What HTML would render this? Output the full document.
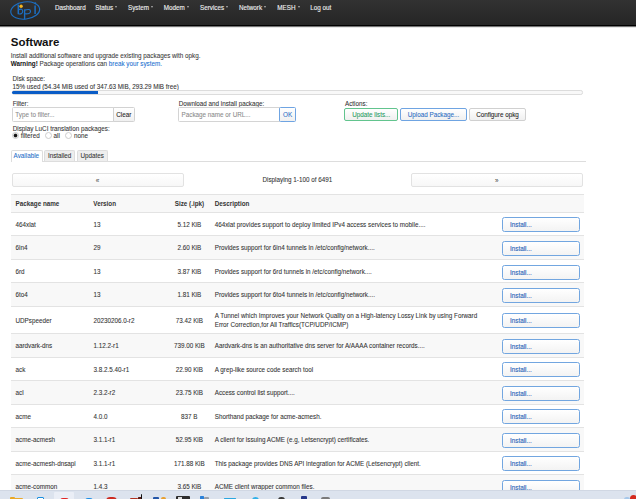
<!DOCTYPE html><html><head><meta charset="utf-8"><style>
*{margin:0;padding:0;box-sizing:border-box}
html,body{width:636px;height:499px;overflow:hidden;background:#fff}
body{font-family:"Liberation Sans",sans-serif;font-size:6.3px;color:#333;position:relative;-webkit-text-stroke:0.07px currentColor}
.t{position:absolute;line-height:8px;white-space:nowrap}
.b,b{font-weight:bold;-webkit-text-stroke:0}
#hdr{position:absolute;left:0;top:0;width:636px;height:26px;background:linear-gradient(#323232,#252525);border-bottom:1px solid #000;box-shadow:0 1px 1px rgba(0,0,0,.55)}
.nav{color:#f2f2f2;text-shadow:0 -0.5px 0 rgba(0,0,0,.4);-webkit-text-stroke:0.12px #f2f2f2}
.caret{position:absolute;width:0;height:0;border-left:1.5px solid transparent;border-right:1.5px solid transparent;border-top:2px solid #b0b0b0}
.box{position:absolute;border:1px solid #d4d4d4;border-radius:1.5px;background:#fff}
.btn{position:absolute;border:1px solid #c6c6c6;border-radius:2px;background:linear-gradient(#fff,#f0f0f0);text-align:center;line-height:11px;color:#333}
.row{position:absolute;left:11px;width:573px;border-bottom:1px solid #e3e3e3}
.g{background:#f8f8f8}
.inst{position:absolute;left:502.4px;width:77.2px;height:15px;border:1.3px solid #72a6e0;border-radius:2.5px;background:linear-gradient(#fff,#f3f3f3);color:#2a64b8;padding-left:6.6px;-webkit-text-stroke:0.12px #2a64b8;line-height:14.4px}
.tb{position:absolute;bottom:0}
</style></head><body>
<div id="hdr"></div>
<svg style="position:absolute;left:0;top:0" width="50" height="25" viewBox="0 0 50 25">
<g fill="none" stroke="#1d6fc2">
<ellipse cx="25.2" cy="10.5" rx="14.5" ry="8.6" transform="rotate(-7 25.2 10.5)" stroke-width="1.15"/>
<path d="M18.3 4.6 V14.2" stroke-width="1.5"/>
<path d="M18.4 9.8 Q22.6 7.9 22.7 11.3 Q22.6 14.4 18.6 14" stroke-width="1.15"/>
<path d="M24.6 9.4 V19.2" stroke-width="1.4"/>
<path d="M24.6 10.1 Q30.6 8.3 30.5 11.5 Q30.3 14.4 24.7 13.8" stroke-width="1.15"/>
<path d="M35.1 5.4 V14.1" stroke-width="1.5"/>
</g>
<circle cx="35.3" cy="3.2" r="1" fill="#1d6fc2"/>
<circle cx="21.1" cy="6.2" r="1.7" fill="#f4b522"/>
</svg>
<div class="t nav" style="left:54.9px;top:4.02px">Dashboard</div>
<div class="t nav" style="left:95.3px;top:4.02px">Status</div>
<div class="caret" style="left:115.16px;top:6.1px"></div>
<div class="t nav" style="left:128px;top:4.02px">System</div>
<div class="caret" style="left:151.00px;top:6.1px"></div>
<div class="t nav" style="left:163.8px;top:4.02px">Modem</div>
<div class="caret" style="left:186.81px;top:6.1px"></div>
<div class="t nav" style="left:200px;top:4.02px">Services</div>
<div class="caret" style="left:226.16px;top:6.1px"></div>
<div class="t nav" style="left:239px;top:4.02px">Network</div>
<div class="caret" style="left:264.11px;top:6.1px"></div>
<div class="t nav" style="left:277.3px;top:4.02px">MESH</div>
<div class="caret" style="left:297.50px;top:6.1px"></div>
<div class="t nav" style="left:310.3px;top:4.02px">Log out</div>
<div class="t b" style="left:10.8px;top:35.12px;line-height:14px;font-size:11.5px;color:#111">Software</div>
<div class="t" style="left:10.7px;top:51.82px;color:#3a3a3a">Install additional software and upgrade existing packages with opkg.</div>
<div class="t" style="left:10.7px;top:60.42px;color:#3a3a3a"><b style="color:#111">Warning!</b> Package operations can <span style="color:#1a6fd0">break your system.</span></div>
<div class="t" style="left:12.5px;top:75.12px">Disk space:</div>
<div class="t" style="left:12.5px;top:83.42px">15% used (54.34 MiB used of 347.63 MiB, 293.29 MiB free)</div>
<div style="position:absolute;left:12px;top:90.3px;width:571px;height:4.4px;border:1px solid #dcdcdc;border-radius:2.2px;background:#f8f8f8"></div>
<div style="position:absolute;left:12.3px;top:90.8px;width:86px;height:3.4px;background:#0a5cc6;border-radius:1.7px 0 0 1.7px"></div>
<div class="t" style="left:12.7px;top:99.72px">Filter:</div>
<div class="box" style="left:12px;top:107.2px;width:101.6px;height:14.9px;border-radius:1.5px 0 0 1.5px"></div>
<div class="t" style="left:15.3px;top:110.52px;color:#8a8a8a">Type to filter...</div>
<div class="btn" style="left:113px;top:107.2px;width:21.6px;height:14.9px;border-radius:0 1.5px 1.5px 0;line-height:13px;border-color:#d2d2d2;color:#222">Clear</div>
<div class="t" style="left:178.8px;top:99.72px">Download and install package:</div>
<div class="box" style="left:178.4px;top:107.2px;width:101.4px;height:14.9px;border-radius:1.5px 0 0 1.5px"></div>
<div class="t" style="left:181.6px;top:110.52px;color:#8a8a8a">Package name or URL...</div>
<div class="btn" style="left:279.3px;top:107px;width:16.5px;height:14.8px;border-radius:1.5px;line-height:14px;border:1.2px solid #6fa4e2;color:#2a6fc6">OK</div>
<div class="t" style="left:345px;top:99.72px">Actions:</div>
<div class="btn" style="left:344.3px;top:107.6px;width:54px;height:13px;border:1.3px solid #62c48e;color:#1f9a5f">Update lists...</div>
<div class="btn" style="left:400.2px;top:107.6px;width:66.7px;height:13px;border:1.3px solid #6fa4e2;color:#2a6cc2">Upload Package...</div>
<div class="btn" style="left:469.2px;top:107.6px;width:56.6px;height:13px;border-color:#d0d0d0;color:#222">Configure opkg</div>
<div class="t" style="left:12.7px;top:124.62px">Display LuCI translation packages:</div>
<div style="position:absolute;left:11.80px;top:131.8px;width:7px;height:7px;border:1px solid #cdcdcd;border-radius:50%;background:#fff"><div style="position:absolute;left:0.95px;top:0.95px;width:3.1px;height:3.1px;border-radius:50%;background:#111;box-shadow:0 0 0 0.4px #444"></div></div>
<div class="t" style="left:20.75px;top:131.92px">filtered</div>
<div style="position:absolute;left:45.00px;top:131.8px;width:7px;height:7px;border:1px solid #cdcdcd;border-radius:50%;background:#fff"></div>
<div class="t" style="left:53.6px;top:131.92px">all</div>
<div style="position:absolute;left:65.00px;top:131.8px;width:7px;height:7px;border:1px solid #cdcdcd;border-radius:50%;background:#fff"></div>
<div class="t" style="left:74px;top:131.92px">none</div>
<div style="position:absolute;left:11px;top:160.6px;width:574.5px;height:1px;background:#ddd"></div>
<div style="position:absolute;left:10.5px;top:150.4px;width:32px;height:11.2px;border:1px solid #ddd;border-bottom:none;border-radius:2px 2px 0 0;background:#fff"></div>
<div class="t" style="left:13.6px;top:152.32px;color:#1e6fc9">Available</div>
<div style="position:absolute;left:44.4px;top:150.4px;width:30.6px;height:10.2px;border:1px solid #ddd;border-bottom:none;border-radius:2px 2px 0 0;background:#eee"></div>
<div class="t" style="left:47.9px;top:152.32px;color:#333">Installed</div>
<div style="position:absolute;left:76.6px;top:150.4px;width:31px;height:10.2px;border:1px solid #ddd;border-bottom:none;border-radius:2px 2px 0 0;background:#eee"></div>
<div class="t" style="left:80.4px;top:152.32px;color:#333">Updates</div>
<div class="btn" style="left:11.6px;top:173px;width:172px;height:14px;border-color:#e2e2e2;line-height:14px;background:linear-gradient(#fff,#f7f7f7);color:#555">&laquo;</div>
<div class="t" style="left:262.5px;top:176.02px;color:#333">Displaying 1-100 of 6491</div>
<div class="btn" style="left:411px;top:173px;width:171.5px;height:14px;border-color:#e2e2e2;line-height:14px;background:linear-gradient(#fff,#f7f7f7);color:#555">&raquo;</div>
<div style="position:absolute;left:11px;top:194px;width:573px;height:1px;background:#e3e3e3"></div>
<div class="row g" style="top:194.9px;height:17.9px"></div>
<div class="t b" style="left:15.6px;top:199.82px;color:#333">Package name</div>
<div class="t b" style="left:93.3px;top:199.82px;color:#333">Version</div>
<div class="t b" style="left:174.70px;top:199.82px;color:#333">Size (.ipk)</div>
<div class="t b" style="left:214.7px;top:199.82px;color:#333">Description</div>
<div class="row" style="top:212.90px;height:23.00px"></div>
<div class="t" style="left:15.5px;top:220.77px">464xlat</div>
<div class="t" style="left:93.5px;top:220.77px">13</div>
<div class="t" style="left:177.39px;top:220.77px">5.12 KiB</div>
<div class="t" style="left:214.7px;top:220.77px">464xlat provides support to deploy limited IPv4 access services to mobile....</div>
<div class="inst" style="top:217.40px">Install...</div>
<div class="row g" style="top:235.90px;height:24.00px"></div>
<div class="t" style="left:15.5px;top:244.27px">6in4</div>
<div class="t" style="left:93.5px;top:244.27px">29</div>
<div class="t" style="left:177.39px;top:244.27px">2.60 KiB</div>
<div class="t" style="left:214.7px;top:244.27px">Provides support for 6in4 tunnels in /etc/config/network....</div>
<div class="inst" style="top:240.90px">Install...</div>
<div class="row" style="top:259.90px;height:23.20px"></div>
<div class="t" style="left:15.5px;top:267.87px">6rd</div>
<div class="t" style="left:93.5px;top:267.87px">13</div>
<div class="t" style="left:177.39px;top:267.87px">3.87 KiB</div>
<div class="t" style="left:214.7px;top:267.87px">Provides support for 6rd tunnels in /etc/config/network....</div>
<div class="inst" style="top:264.50px">Install...</div>
<div class="row g" style="top:283.10px;height:23.80px"></div>
<div class="t" style="left:15.5px;top:291.37px">6to4</div>
<div class="t" style="left:93.5px;top:291.37px">13</div>
<div class="t" style="left:177.39px;top:291.37px">1.81 KiB</div>
<div class="t" style="left:214.7px;top:291.37px">Provides support for 6to4 tunnels in /etc/config/network....</div>
<div class="inst" style="top:288.00px">Install...</div>
<div class="row" style="top:306.90px;height:26.90px"></div>
<div class="t" style="left:15.5px;top:316.72px">UDPspeeder</div>
<div class="t" style="left:93.5px;top:316.72px">20230206.0-r2</div>
<div class="t" style="left:175.64px;top:316.72px">73.42 KiB</div>
<div class="t" style="left:214.7px;top:312.42px;line-height:8.6px">A Tunnel which Improves your Network Quality on a High-latency Lossy Link by using Forward<br>Error Correction,for All Traffics(TCP/UDP/ICMP)</div>
<div class="inst" style="top:313.35px">Install...</div>
<div class="row g" style="top:333.80px;height:24.10px"></div>
<div class="t" style="left:15.5px;top:342.22px">aardvark-dns</div>
<div class="t" style="left:93.5px;top:342.22px">1.12.2-r1</div>
<div class="t" style="left:173.89px;top:342.22px">739.00 KiB</div>
<div class="t" style="left:214.7px;top:342.22px">Aardvark-dns is an authoritative dns server for A/AAAA container records....</div>
<div class="inst" style="top:338.85px">Install...</div>
<div class="row" style="top:357.90px;height:23.00px"></div>
<div class="t" style="left:15.5px;top:365.77px">ack</div>
<div class="t" style="left:93.5px;top:365.77px">3.8.2.5.40-r1</div>
<div class="t" style="left:175.64px;top:365.77px">22.90 KiB</div>
<div class="t" style="left:214.7px;top:365.77px">A grep-like source code search tool</div>
<div class="inst" style="top:362.40px">Install...</div>
<div class="row g" style="top:380.90px;height:23.70px"></div>
<div class="t" style="left:15.5px;top:389.12px">acl</div>
<div class="t" style="left:93.5px;top:389.12px">2.3.2-r2</div>
<div class="t" style="left:175.64px;top:389.12px">23.75 KiB</div>
<div class="t" style="left:214.7px;top:389.12px">Access control list support....</div>
<div class="inst" style="top:385.75px">Install...</div>
<div class="row" style="top:404.60px;height:23.10px"></div>
<div class="t" style="left:15.5px;top:412.52px">acme</div>
<div class="t" style="left:93.5px;top:412.52px">4.0.0</div>
<div class="t" style="left:181.07px;top:412.52px">837 B</div>
<div class="t" style="left:214.7px;top:412.52px">Shorthand package for acme-acmesh.</div>
<div class="inst" style="top:409.15px">Install...</div>
<div class="row g" style="top:427.70px;height:24.10px"></div>
<div class="t" style="left:15.5px;top:436.12px">acme-acmesh</div>
<div class="t" style="left:93.5px;top:436.12px">3.1.1-r1</div>
<div class="t" style="left:175.64px;top:436.12px">52.95 KiB</div>
<div class="t" style="left:214.7px;top:436.12px">A client for issuing ACME (e.g, Letsencrypt) certificates.</div>
<div class="inst" style="top:432.75px">Install...</div>
<div class="row" style="top:451.80px;height:23.10px"></div>
<div class="t" style="left:15.5px;top:459.72px">acme-acmesh-dnsapi</div>
<div class="t" style="left:93.5px;top:459.72px">3.1.1-r1</div>
<div class="t" style="left:173.89px;top:459.72px">171.88 KiB</div>
<div class="t" style="left:214.7px;top:459.72px">This package provides DNS API integration for ACME (Letsencrypt) client.</div>
<div class="inst" style="top:456.35px">Install...</div>
<div class="row g" style="top:474.90px;height:23.40px"></div>
<div class="t" style="left:15.5px;top:482.97px">acme-common</div>
<div class="t" style="left:93.5px;top:482.97px">1.4.3</div>
<div class="t" style="left:177.39px;top:482.97px">3.65 KiB</div>
<div class="t" style="left:214.7px;top:482.97px">ACME client wrapper common files.</div>
<div class="inst" style="top:479.60px">Install...</div>
<div style="position:absolute;left:0;top:490.2px;width:636px;height:9px;background:#dce3ee;border-top:0.8px solid #d0d7e3"></div>
<div style="position:absolute;left:54.2px;top:491.5px;width:20px;height:8px;background:#eaeef6;border-radius:1px"></div>
<div style="position:absolute;left:9.9px;top:497px;width:5.5px;height:4.0px;background:#e9a825;border-radius:1px 1px 0 0"></div>
<div style="position:absolute;left:13px;top:498px;width:10.1px;height:3.0px;background:#eaa92c;border-radius:1px 1px 0 0"></div>
<div style="position:absolute;left:36.8px;top:497px;width:7.1px;height:4px;border:1.3px solid #1a8fe0;background:#fff;border-radius:1px"></div>
<div style="position:absolute;left:60px;top:497.5px;width:9px;height:3.5px;background:#e02424;border-radius:4px 4px 0 0"></div>
<div style="position:absolute;left:85px;top:497.5px;width:7.5px;height:3.5px;background:#1e8fe6;border-radius:3.5px 3.5px 0 0"></div>
<div style="position:absolute;left:106.2px;top:497.3px;width:10.4px;height:3.7px;background:#cc2a20;border-radius:4.5px 4.5px 0 0"></div>
<div style="position:absolute;left:130px;top:497.5px;width:8px;height:3.5px;background:#b0301f;border-radius:1px 1px 0 0"></div>
<div style="position:absolute;left:138px;top:496.5px;width:4px;height:4.5px;background:#5a1a14;border-radius:0.5px 0.5px 0 0"></div>
<div style="position:absolute;left:141px;top:494px;width:1.4px;height:7.0px;background:#111;border-radius:0.5px 0.5px 0 0"></div>
<div style="position:absolute;left:153px;top:497px;width:5.5px;height:4.0px;background:#2456a8;border-radius:1px 1px 0 0"></div>
<div style="position:absolute;left:161px;top:497.2px;width:5px;height:3.8px;background:#e8a030;border-radius:2px 2px 0 0"></div>
<div style="position:absolute;left:176px;top:496.2px;width:13.6px;height:4.8px;background:#2d2d2d;border-radius:1px 1px 0 0"></div>
<div style="position:absolute;left:178px;top:497px;width:4px;height:4.0px;background:#ddd;border-radius:0px 0px 0 0"></div>
<div style="position:absolute;left:200.2px;top:496px;width:4.2px;height:5.0px;background:#2a80d8;border-radius:0.5px 0.5px 0 0"></div>
<div style="position:absolute;left:204.4px;top:497px;width:4.6px;height:4.0px;background:#9aa0aa;border-radius:1px 1px 0 0"></div>
<div style="position:absolute;left:223.8px;top:498.2px;width:12.7px;height:2.8px;background:#2aa7e0;border-radius:0.5px 0.5px 0 0"></div>
<div style="position:absolute;left:251.6px;top:497px;width:7.8px;height:4.0px;background:#30b0e8;border-radius:3.5px 3.5px 0 0"></div>
<div style="position:absolute;left:277.6px;top:497px;width:7px;height:4.0px;background:#3a3a3a;border-radius:3px 3px 0 0"></div>
<div style="position:absolute;left:301px;top:496px;width:6.2px;height:5.0px;background:#26378a;border-radius:1px 1px 0 0"></div>
<div style="position:absolute;left:321px;top:496.5px;width:8.8px;height:4.5px;background:#7a7a7a;border-radius:2px 2px 0 0"></div>
<div style="position:absolute;left:624px;top:497px;width:5.5px;height:4.0px;background:#a6c8ea;border-radius:2.5px 2.5px 0 0"></div>
<div style="position:absolute;left:629.5px;top:495.3px;width:7px;height:5.7px;background:#d42a1e;border-radius:3.5px 3.5px 0 0"></div>
</body></html>
